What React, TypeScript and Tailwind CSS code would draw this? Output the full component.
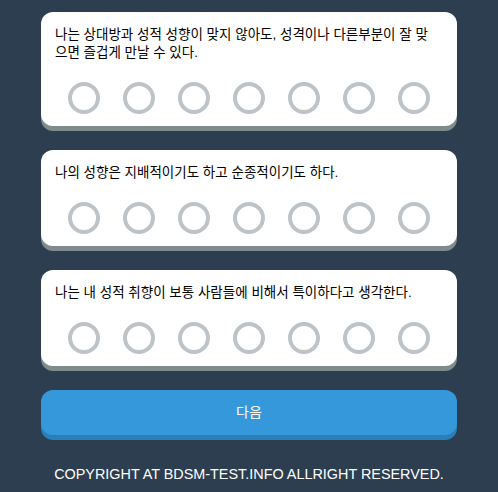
const questions = [
  '나는 상대방과 성적 성향이 맞지 않아도, 성격이나 다른부분이 잘 맞으면 즐겁게 만날 수 있다.',
  '나의 성향은 지배적이기도 하고 순종적이기도 하다.',
  '나는 내 성적 취향이 보통 사람들에 비해서 특이하다고 생각한다.',
];

const choices = [0, 1, 2, 3, 4, 5, 6];

const App = () => {
  return (
    <div className="min-h-[492px] bg-[#2c3e50] px-[41px] pt-3 pb-4 font-['Liberation_Sans','Noto_Sans_CJK_KR',sans-serif]">
      {/* questions */}
      {questions.map((q, key) => (
        <div
          key={key}
          className="mb-6 rounded-xl bg-white px-[14px] pt-[14px] pb-3 shadow-[0_5px_0_#7f8c8d]"
        >
          <div className="mb-5 pr-2 text-[13.5px] leading-[18px] text-black">{q}</div>
          <div className="flex justify-center gap-[23px]">
            {choices.map((c) => (
              <div key={c} className="h-8 w-8 rounded-full border-4 border-[#bdc3c7] bg-white" />
            ))}
          </div>
        </div>
      ))}
      {/* next */}
      <button className="flex h-[45px] w-full items-center justify-center rounded-xl bg-[#3498db] text-[14px] text-white shadow-[0_5px_0_#2980b9]">
        다음
      </button>
      <div className="mt-[29px] text-center text-[14.4px] leading-5 uppercase text-white">
        Copyright at bdsm-test.info allright reserved.
      </div>
    </div>
  );
};

export default App;
